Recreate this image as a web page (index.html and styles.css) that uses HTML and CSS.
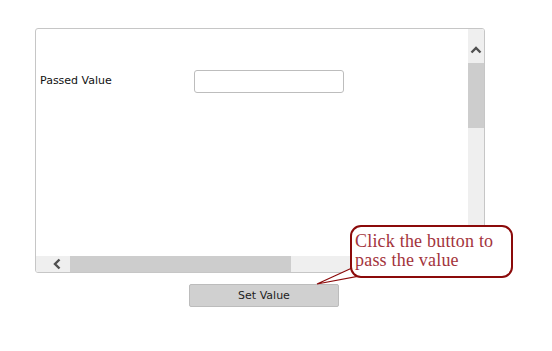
FILE: index.html
```html
<!DOCTYPE html>
<html>
<head>
<meta charset="utf-8">
<link rel="stylesheet" href="styles.css">
</head>
<body>
<div class="page">
  <div class="frame">
    <div class="main">
      <div class="content">
        <div class="row">
          <label class="label">Passed Value</label>
          <input class="field" type="text">
        </div>
      </div>
      <div class="vscroll">
        <div class="vbtn">
          <svg width="12" height="8" viewBox="0 0 12 8"><path d="M1.5 6.5 L6 2 L10.5 6.5" fill="none" stroke="#505050" stroke-width="2.4"/></svg>
        </div>
        <div class="vthumb"></div>
      </div>
    </div>
    <div class="hscroll">
      <div class="hbtn">
        <svg width="8" height="12" viewBox="0 0 8 12"><path d="M6.5 1.5 L2 6 L6.5 10.5" fill="none" stroke="#505050" stroke-width="2.4"/></svg>
      </div>
      <div class="hthumb"></div>
    </div>
  </div>
  <div class="actions">
    <button class="btn">Set Value</button>
  </div>

  <svg class="tail" width="50" height="26" viewBox="0 0 50 26">
    <polygon points="37,3 2,19 44,11" fill="#fff" stroke="#8b0a0a" stroke-width="1.2"/>
  </svg>
  <div class="callout">Click the button to<br>pass the value</div>
</div>
</body>
</html>
```

FILE: styles.css
```css
html, body {
  margin: 0;
  padding: 0;
  background: #fff;
}
.page {
  position: relative;
  width: 552px;
  height: 351px;
  padding-top: 28px;
  box-sizing: border-box;
}
.frame {
  margin-left: 35px;
  width: 448px;
  height: 243px;
  border: 1px solid #c6c6c6;
  border-radius: 3px;
  display: flex;
  flex-direction: column;
  overflow: hidden;
}
.main {
  display: flex;
  height: 227px;
}
.content {
  flex: 1;
  padding: 41px 0 0 4px;
}
.row {
  display: flex;
  align-items: center;
}
.label {
  width: 154px;
  font-family: "DejaVu Sans", Verdana, sans-serif;
  font-size: 11px;
  color: #111;
  padding-bottom: 3px;
}
.field {
  width: 150px;
  height: 23px;
  box-sizing: border-box;
  border: 1px solid #bdbdbd;
  border-radius: 3px;
  margin: 0;
  padding: 0 4px;
  background: #fff;
}
.vscroll {
  width: 16px;
  background: #efefef;
  display: flex;
  flex-direction: column;
  align-items: center;
}
.vbtn {
  height: 34px;
  display: flex;
  align-items: center;
  justify-content: center;
  padding-top: 8px;
  box-sizing: border-box;
}
.vthumb {
  width: 16px;
  height: 65px;
  background: #cdcdcd;
}
.hscroll {
  height: 16px;
  background: #efefef;
  display: flex;
  align-items: center;
}
.hbtn {
  width: 34px;
  display: flex;
  justify-content: center;
  padding-left: 8px;
  box-sizing: border-box;
}
.hthumb {
  width: 221px;
  height: 16px;
  background: #cdcdcd;
}
.actions {
  margin: 11px 0 0 189px;
}
.btn {
  width: 150px;
  height: 23px;
  border: 1px solid #bcbcbc;
  border-radius: 2px;
  background: #d0d0d0;
  font-family: "DejaVu Sans", Verdana, sans-serif;
  font-size: 11px;
  color: #222;
  padding: 0;
  margin: 0;
}
.tail {
  position: absolute;
  left: 315px;
  top: 265px;
}
.callout {
  position: absolute;
  left: 350px;
  top: 225px;
  width: 156px;
  height: 44px;
  border: 2.5px solid #8b0a0a;
  border-radius: 11px;
  background: #fff;
  font-family: "Liberation Serif", "Times New Roman", serif;
  font-size: 18px;
  line-height: 19px;
  letter-spacing: 0.2px;
  color: #a3343c;
  padding: 5px 0 0 3px;
  box-sizing: content-box;
}
```
